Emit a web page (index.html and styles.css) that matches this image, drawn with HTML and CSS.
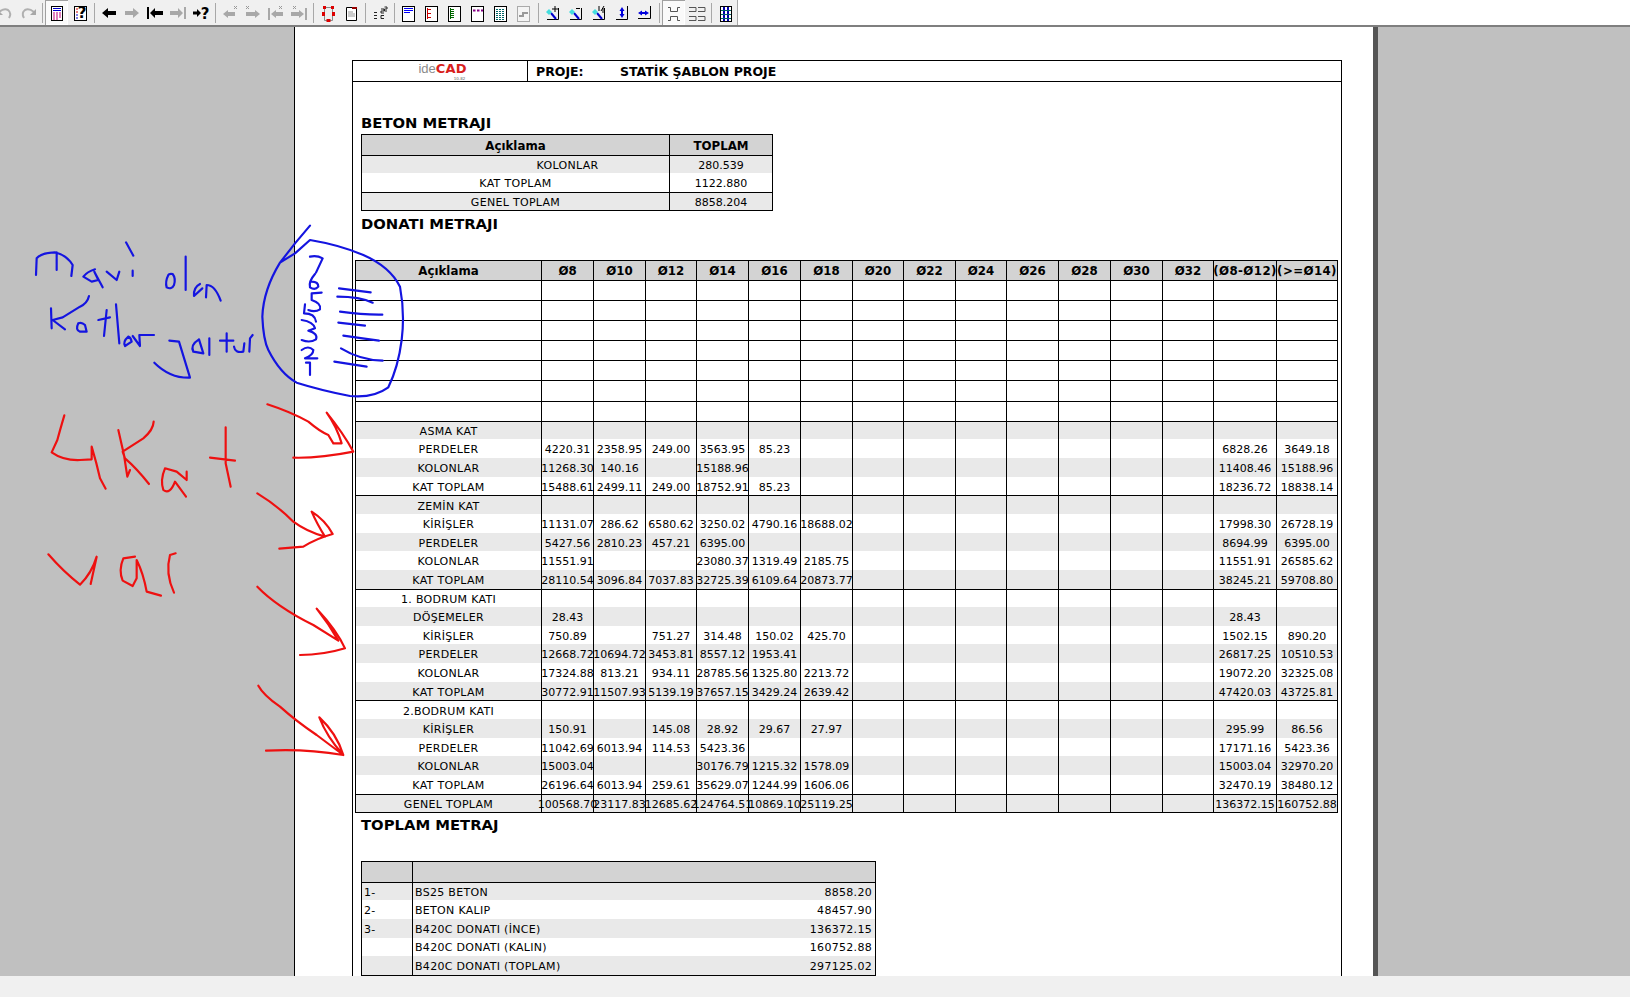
FILE: index.html
```html
<!DOCTYPE html>
<html lang="tr">
<head>
<meta charset="utf-8">
<title>Metraj</title>
<link rel="stylesheet" href="styles.css">
</head>
<body>
<div class="toolbar">
  <div class="tools">
    <span class="btn"><svg viewBox="0 0 20 20"><path d="M4 9 Q9 5 13 7 Q17 10 14 15" class="ln-g"/><path d="M2 6 L2 12 L8 12 Z" class="fl-g"/></svg></span>
    <span class="btn"><svg viewBox="0 0 20 20"><path d="M16 9 Q11 5 7 7 Q3 10 6 15" class="ln-g"/><path d="M18 6 L18 12 L12 12 Z" class="fl-g"/></svg></span>
    <span class="sep"></span>
    <span class="btn on"><svg viewBox="0 0 20 20"><rect x="4.5" y="3.5" width="11" height="14" class="doc"/><path d="M6 5.500H14M6 7.500H14" stroke="#00c"/><path d="M6 10H8M9 10H11M12 10H14M6 12H8M9 12H11M12 12H14M6 14H8M9 14H11M12 14H14M6 16H8M9 16H11" stroke="#c0007a"/></svg></span>
    <span class="btn"><svg viewBox="0 0 20 20"><rect x="4.5" y="3.5" width="12" height="14" class="doc"/><path d="M6 6H8M6 9H8" stroke="#c00"/><path d="M6 12H8M6 15H8" stroke="#00c"/><text x="12" y="15" class="q">?</text></svg></span>
    <span class="sep"></span>
    <span class="btn"><svg viewBox="0 0 20 20"><path d="M3 10 L9 5 V8 H17 V12 H9 V15 Z" class="fl-k"/></svg></span>
    <span class="btn"><svg viewBox="0 0 20 20"><path d="M17 10 L11 5 V8 H3 V12 H11 V15 Z" class="fl-g"/></svg></span>
    <span class="btn"><svg viewBox="0 0 20 20"><path d="M2 4 H4 V16 H2 Z M5 10 L10 5 V8 H18 V12 H10 V15 Z" class="fl-k"/></svg></span>
    <span class="btn"><svg viewBox="0 0 20 20"><path d="M18 4 H16 V16 H18 Z M15 10 L10 5 V8 H2 V12 H10 V15 Z" class="fl-g"/></svg></span>
    <span class="btn"><svg viewBox="0 0 20 20"><path d="M10 10 L6 6 V8.500 H2 V11.500 H6 V14 Z" class="fl-k"/><text x="14" y="16" class="q">?</text></svg></span>
    <span class="sep"></span>
    <span class="btn"><svg viewBox="0 0 20 20"><path d="M3 11 L8 7 V9 H15 V13 H8 V15 Z" class="fl-g"/><path d="M14 3 L17 6 M17 3 L14 6" class="ln-x"/></svg></span>
    <span class="btn"><svg viewBox="0 0 20 20"><path d="M17 11 L12 7 V9 H3 V13 H12 V15 Z" class="fl-g"/><path d="M3 3 L6 6 M6 3 L3 6" class="ln-x"/></svg></span>
    <span class="btn"><svg viewBox="0 0 20 20"><path d="M2 5 H4 V17 H2 Z M5 11 L10 7 V9 H17 V13 H10 V15 Z" class="fl-g"/><path d="M13 3 L16 6 M16 3 L13 6" class="ln-x"/></svg></span>
    <span class="btn"><svg viewBox="0 0 20 20"><path d="M18 5 H16 V17 H18 Z M15 11 L10 7 V9 H2 V13 H10 V15 Z" class="fl-g"/><path d="M4 3 L7 6 M7 3 L4 6" class="ln-x"/></svg></span>
    <span class="sep"></span>
    <span class="btn"><svg viewBox="0 0 20 20"><path d="M6.500 4.500H14.500V17.500H6.500Z" fill="#eee" stroke="#888"/><path d="M5 3H8V6H5Z M13 3H16V6H13Z M4 9H7V13H4Z M14 9H17V13H14Z M8.500 16H12.500V19H8.500Z" fill="#d00"/></svg></span>
    <span class="btn"><svg viewBox="0 0 20 20"><path d="M5.500 4.500H15.500V17.500H5.500Z" fill="#fff" stroke="#000"/><path d="M11 4H16V6H11Z" fill="#900"/><path d="M7 9H12M7 11H14M7 13H14" stroke="#999"/></svg></span>
    <span class="sep"></span>
    <span class="btn"><svg viewBox="0 0 20 20"><path d="M4 9.500H7M4 12.500H7M4 15.500H7M11 6H14V8H11V10H14M11 12.500H14M11 15.500H14M11 12.500V15.500M14.500 4H17V6H14.500V8H17" fill="none" stroke="#222"/></svg></span>
    <span class="sep"></span>
    <span class="btn"><svg viewBox="0 0 20 20"><rect x="3.500" y="3.500" width="12" height="15" class="doc"/><path d="M5 5.500H14M5 7.500H14M5 9.500H11" stroke="#00f"/></svg></span>
    <span class="btn"><svg viewBox="0 0 20 20"><rect x="3.500" y="3.500" width="12" height="15" class="doc"/><path d="M5 6.500H9M5 10.500H9M5 14.500H9M5.500 5V16" stroke="#c00"/></svg></span>
    <span class="btn"><svg viewBox="0 0 20 20"><rect x="3.500" y="3.500" width="12" height="15" class="doc"/><path d="M5 6.500H9M5 8.500H9M5 10.500H9M5 12.500H9M5 14.500H9M5.500 5V16" stroke="#060"/></svg></span>
    <span class="btn"><svg viewBox="0 0 20 20"><rect x="3.500" y="3.500" width="12" height="15" class="doc"/><path d="M5 7.500H7.500M9 7.500H11.500M13 7.500H15" stroke="#808" stroke-width="2"/></svg></span>
    <span class="btn"><svg viewBox="0 0 20 20"><rect x="3.500" y="3.500" width="12" height="15" class="doc"/><path d="M5 6.500H14M5 8.500H14M5 10.500H14M5 12.500H14M5 14.500H14M5 16.500H14" stroke="#066" stroke-dasharray="2 1"/></svg></span>
    <span class="btn"><svg viewBox="0 0 20 20"><rect x="3.500" y="3.500" width="12" height="15" fill="#f4f4f4" stroke="#aaa"/><path d="M5 13H9V10H14" fill="none" stroke="#999" stroke-width="2"/></svg></span>
    <span class="sep"></span>
    <span class="btn"><svg viewBox="0 0 20 20"><path d="M4 16.500H15.500V5" class="thin"/><path d="M8 10 L13 16" stroke="#00c" stroke-width="2"/><path d="M3 9 L6 6 L9 9 L6 12Z" fill="#4dd"/><path d="M12 3V9M9 6H15" stroke="#000"/></svg></span>
    <span class="btn"><svg viewBox="0 0 20 20"><path d="M4 16.500H15.500V5" class="thin"/><path d="M8 10 L13 16" stroke="#00c" stroke-width="2"/><path d="M3 9 L6 6 L9 9 L6 12Z" fill="#4dd"/><path d="M10 5.500H14" stroke="#000"/></svg></span>
    <span class="btn"><svg viewBox="0 0 20 20"><path d="M4 16.500H15.500V5" class="thin"/><path d="M8 10 L13 16" stroke="#00c" stroke-width="2"/><path d="M3 9 L6 6 L9 9 L6 12Z" fill="#4dd"/><path d="M10 3V8M12 8L15 3M14 5V10" stroke="#000"/></svg></span>
    <span class="btn"><svg viewBox="0 0 20 20"><path d="M4 16.500H15.500V3" class="thin"/><path d="M10 4 L7.500 8 H9 V11 H7.500 L10 15 L12.500 11 H11 V8 H12.500Z" fill="#00d"/></svg></span>
    <span class="btn"><svg viewBox="0 0 20 20"><path d="M3 15.500H15.500V3" class="thin"/><path d="M3 10 L7 7.500 V9 H10 V7.500 L14 10 L10 12.500 V11 H7 V12.500Z" fill="#00d"/></svg></span>
    <span class="sep"></span>
    <span class="btn on"><svg viewBox="0 0 20 20"><path d="M4 4.500H6.500V8.500H13.500V4.500H16M4 17.500H6.500V13.500H13.500V17.500H16" class="gr"/></svg></span>
    <span class="btn"><svg viewBox="0 0 20 20"><path d="M2 4.500H9V8.500H2M11 4.500H18V8.500H11M2 17.500H9V13.500H2M11 17.500H18V13.500H11" class="gr"/></svg></span>
    <span class="sep"></span>
    <span class="btn"><svg viewBox="0 0 20 20"><rect x="4.500" y="3.500" width="11" height="15" class="doc"/><path d="M8 4V18M12 4V18" stroke="#00a" stroke-width="2"/><path d="M5 7.500H15M5 11.500H15M5 15.500H15" stroke="#066"/></svg></span>
    <span class="end"></span>
  </div>
</div>

<div class="main">
  <div class="page">
    <div class="frame">
      <div class="head">
        <div class="logo"><span class="mark"><span class="ide">ide</span><span class="cad">CAD</span></span><span class="ver">10.82</span></div>
        <div class="proj"><span class="plabel">PROJE:</span><span>STATİK ŞABLON PROJE</span></div>
      </div>
      <div class="body">
        <h2 class="t1">BETON METRAJI</h2>
        <table class="tb beton">
          <colgroup><col class="b1"><col class="b2"></colgroup>
          <tr class="h21 hd ln"><th class="fst">Açıklama</th><th>TOPLAM</th></tr>
          <tr class="h18 bd ln"><td class="fst lab indent">KOLONLAR</td><td>280.539</td></tr>
          <tr class="h19"><td class="fst lab">KAT TOPLAM</td><td>1122.880</td></tr>
          <tr class="h19 bd ln bot"><td class="fst lab">GENEL TOPLAM</td><td>8858.204</td></tr>
        </table>

        <h2 class="t2">DONATI METRAJI</h2>
        <table class="tb donati">
          <colgroup><col class="d0"><col class="w52"><col class="w52"><col class="w51"><col class="w52"><col class="w52"><col class="w52"><col class="w51"><col class="w52"><col class="w51"><col class="w52"><col class="w52"><col class="w52"><col class="w51"><col class="w63"><col class="w61"></colgroup>
          <tr class="h20 hd ln"><th class="fst">Açıklama</th><th>Ø8</th><th>Ø10</th><th>Ø12</th><th>Ø14</th><th>Ø16</th><th>Ø18</th><th>Ø20</th><th>Ø22</th><th>Ø24</th><th>Ø26</th><th>Ø28</th><th>Ø30</th><th>Ø32</th><th><span class="n wide">(Ø8-Ø12)</span></th><th><span class="n wide">(&gt;=Ø14)</span></th></tr>
          <tr class="h20 ln"><td class="fst"></td><td></td><td></td><td></td><td></td><td></td><td></td><td></td><td></td><td></td><td></td><td></td><td></td><td></td><td></td><td></td></tr>
          <tr class="h20 ln"><td class="fst"></td><td></td><td></td><td></td><td></td><td></td><td></td><td></td><td></td><td></td><td></td><td></td><td></td><td></td><td></td><td></td></tr>
          <tr class="h20 ln"><td class="fst"></td><td></td><td></td><td></td><td></td><td></td><td></td><td></td><td></td><td></td><td></td><td></td><td></td><td></td><td></td><td></td></tr>
          <tr class="h20 ln"><td class="fst"></td><td></td><td></td><td></td><td></td><td></td><td></td><td></td><td></td><td></td><td></td><td></td><td></td><td></td><td></td><td></td></tr>
          <tr class="h20 ln"><td class="fst"></td><td></td><td></td><td></td><td></td><td></td><td></td><td></td><td></td><td></td><td></td><td></td><td></td><td></td><td></td><td></td></tr>
          <tr class="h21 ln"><td class="fst"></td><td></td><td></td><td></td><td></td><td></td><td></td><td></td><td></td><td></td><td></td><td></td><td></td><td></td><td></td><td></td></tr>
          <tr class="h20 ln"><td class="fst"></td><td></td><td></td><td></td><td></td><td></td><td></td><td></td><td></td><td></td><td></td><td></td><td></td><td></td><td></td><td></td></tr>

          <tr class="h18 bd ln"><td class="fst lab">ASMA KAT</td><td></td><td></td><td></td><td></td><td></td><td></td><td></td><td></td><td></td><td></td><td></td><td></td><td></td><td></td><td></td></tr>
          <tr class="h19"><td class="fst lab">PERDELER</td><td><span class="n">4220.31</span></td><td><span class="n">2358.95</span></td><td><span class="n">249.00</span></td><td><span class="n">3563.95</span></td><td><span class="n">85.23</span></td><td></td><td></td><td></td><td></td><td></td><td></td><td></td><td></td><td><span class="n">6828.26</span></td><td><span class="n">3649.18</span></td></tr>
          <tr class="h19 bd"><td class="fst lab">KOLONLAR</td><td><span class="n">11268.30</span></td><td><span class="n">140.16</span></td><td></td><td><span class="n">15188.96</span></td><td></td><td></td><td></td><td></td><td></td><td></td><td></td><td></td><td></td><td><span class="n">11408.46</span></td><td><span class="n">15188.96</span></td></tr>
          <tr class="h18"><td class="fst lab">KAT TOPLAM</td><td><span class="n">15488.61</span></td><td><span class="n">2499.11</span></td><td><span class="n">249.00</span></td><td><span class="n">18752.91</span></td><td><span class="n">85.23</span></td><td></td><td></td><td></td><td></td><td></td><td></td><td></td><td></td><td><span class="n">18236.72</span></td><td><span class="n">18838.14</span></td></tr>

          <tr class="h19 bd ln"><td class="fst lab">ZEMİN KAT</td><td></td><td></td><td></td><td></td><td></td><td></td><td></td><td></td><td></td><td></td><td></td><td></td><td></td><td></td><td></td></tr>
          <tr class="h19"><td class="fst lab">KİRİŞLER</td><td><span class="n">11131.07</span></td><td><span class="n">286.62</span></td><td><span class="n">6580.62</span></td><td><span class="n">3250.02</span></td><td><span class="n">4790.16</span></td><td><span class="n">18688.02</span></td><td></td><td></td><td></td><td></td><td></td><td></td><td></td><td><span class="n">17998.30</span></td><td><span class="n">26728.19</span></td></tr>
          <tr class="h18 bd"><td class="fst lab">PERDELER</td><td><span class="n">5427.56</span></td><td><span class="n">2810.23</span></td><td><span class="n">457.21</span></td><td><span class="n">6395.00</span></td><td></td><td></td><td></td><td></td><td></td><td></td><td></td><td></td><td></td><td><span class="n">8694.99</span></td><td><span class="n">6395.00</span></td></tr>
          <tr class="h19"><td class="fst lab">KOLONLAR</td><td><span class="n">11551.91</span></td><td></td><td></td><td><span class="n">23080.37</span></td><td><span class="n">1319.49</span></td><td><span class="n">2185.75</span></td><td></td><td></td><td></td><td></td><td></td><td></td><td></td><td><span class="n">11551.91</span></td><td><span class="n">26585.62</span></td></tr>
          <tr class="h19 bd"><td class="fst lab">KAT TOPLAM</td><td><span class="n">28110.54</span></td><td><span class="n">3096.84</span></td><td><span class="n">7037.83</span></td><td><span class="n">32725.39</span></td><td><span class="n">6109.64</span></td><td><span class="n">20873.77</span></td><td></td><td></td><td></td><td></td><td></td><td></td><td></td><td><span class="n">38245.21</span></td><td><span class="n">59708.80</span></td></tr>

          <tr class="h18 ln"><td class="fst lab">1. BODRUM KATI</td><td></td><td></td><td></td><td></td><td></td><td></td><td></td><td></td><td></td><td></td><td></td><td></td><td></td><td></td><td></td></tr>
          <tr class="h19 bd"><td class="fst lab">DÖŞEMELER</td><td><span class="n">28.43</span></td><td></td><td></td><td></td><td></td><td></td><td></td><td></td><td></td><td></td><td></td><td></td><td></td><td><span class="n">28.43</span></td><td></td></tr>
          <tr class="h18"><td class="fst lab">KİRİŞLER</td><td><span class="n">750.89</span></td><td></td><td><span class="n">751.27</span></td><td><span class="n">314.48</span></td><td><span class="n">150.02</span></td><td><span class="n">425.70</span></td><td></td><td></td><td></td><td></td><td></td><td></td><td></td><td><span class="n">1502.15</span></td><td><span class="n">890.20</span></td></tr>
          <tr class="h19 bd"><td class="fst lab">PERDELER</td><td><span class="n">12668.72</span></td><td><span class="n">10694.72</span></td><td><span class="n">3453.81</span></td><td><span class="n">8557.12</span></td><td><span class="n">1953.41</span></td><td></td><td></td><td></td><td></td><td></td><td></td><td></td><td></td><td><span class="n">26817.25</span></td><td><span class="n">10510.53</span></td></tr>
          <tr class="h19"><td class="fst lab">KOLONLAR</td><td><span class="n">17324.88</span></td><td><span class="n">813.21</span></td><td><span class="n">934.11</span></td><td><span class="n">28785.56</span></td><td><span class="n">1325.80</span></td><td><span class="n">2213.72</span></td><td></td><td></td><td></td><td></td><td></td><td></td><td></td><td><span class="n">19072.20</span></td><td><span class="n">32325.08</span></td></tr>
          <tr class="h18 bd"><td class="fst lab">KAT TOPLAM</td><td><span class="n">30772.91</span></td><td><span class="n">11507.93</span></td><td><span class="n">5139.19</span></td><td><span class="n">37657.15</span></td><td><span class="n">3429.24</span></td><td><span class="n">2639.42</span></td><td></td><td></td><td></td><td></td><td></td><td></td><td></td><td><span class="n">47420.03</span></td><td><span class="n">43725.81</span></td></tr>

          <tr class="h19 ln"><td class="fst lab">2.BODRUM KATI</td><td></td><td></td><td></td><td></td><td></td><td></td><td></td><td></td><td></td><td></td><td></td><td></td><td></td><td></td><td></td></tr>
          <tr class="h19 bd"><td class="fst lab">KİRİŞLER</td><td><span class="n">150.91</span></td><td></td><td><span class="n">145.08</span></td><td><span class="n">28.92</span></td><td><span class="n">29.67</span></td><td><span class="n">27.97</span></td><td></td><td></td><td></td><td></td><td></td><td></td><td></td><td><span class="n">295.99</span></td><td><span class="n">86.56</span></td></tr>
          <tr class="h18"><td class="fst lab">PERDELER</td><td><span class="n">11042.69</span></td><td><span class="n">6013.94</span></td><td><span class="n">114.53</span></td><td><span class="n">5423.36</span></td><td></td><td></td><td></td><td></td><td></td><td></td><td></td><td></td><td></td><td><span class="n">17171.16</span></td><td><span class="n">5423.36</span></td></tr>
          <tr class="h19 bd"><td class="fst lab">KOLONLAR</td><td><span class="n">15003.04</span></td><td></td><td></td><td><span class="n">30176.79</span></td><td><span class="n">1215.32</span></td><td><span class="n">1578.09</span></td><td></td><td></td><td></td><td></td><td></td><td></td><td></td><td><span class="n">15003.04</span></td><td><span class="n">32970.20</span></td></tr>
          <tr class="h19"><td class="fst lab">KAT TOPLAM</td><td><span class="n">26196.64</span></td><td><span class="n">6013.94</span></td><td><span class="n">259.61</span></td><td><span class="n">35629.07</span></td><td><span class="n">1244.99</span></td><td><span class="n">1606.06</span></td><td></td><td></td><td></td><td></td><td></td><td></td><td></td><td><span class="n">32470.19</span></td><td><span class="n">38480.12</span></td></tr>

          <tr class="h19 bd ln bot"><td class="fst lab">GENEL TOPLAM</td><td><span class="n">100568.70</span></td><td><span class="n">23117.83</span></td><td><span class="n">12685.62</span></td><td><span class="n">124764.51</span></td><td><span class="n">10869.10</span></td><td><span class="n">25119.25</span></td><td></td><td></td><td></td><td></td><td></td><td></td><td></td><td><span class="n">136372.15</span></td><td><span class="n">160752.88</span></td></tr>
        </table>

        <h2 class="t3">TOPLAM METRAJ</h2>
        <table class="tb toplam">
          <colgroup><col class="p1"><col class="p2"></colgroup>
          <tr class="h21 hd ln"><th class="fst"></th><th></th></tr>
          <tr class="h18 bd ln"><td class="fst no lab">1-</td><td class="txt lab"><span>BS25 BETON</span><span>8858.20</span></td></tr>
          <tr class="h19"><td class="fst no lab">2-</td><td class="txt lab"><span>BETON KALIP</span><span>48457.90</span></td></tr>
          <tr class="h19 bd"><td class="fst no lab">3-</td><td class="txt lab"><span>B420C DONATI (İNCE)</span><span>136372.15</span></td></tr>
          <tr class="h18"><td class="fst no"></td><td class="txt lab"><span>B420C DONATI (KALIN)</span><span>160752.88</span></td></tr>
          <tr class="h20 bd bot"><td class="fst no"></td><td class="txt lab"><span>B420C DONATI (TOPLAM)</span><span>297125.02</span></td></tr>
        </table>
      </div>
    </div>
  </div>
</div>
<div class="status"></div>

<svg class="ink" viewBox="0 0 1630 997" aria-hidden="true">
  <g transform="translate(0 210) scale(.33333)" class="blue">
    <path d="M108 195 L110 145 Q125 128 165 127 Q200 135 218 165 L214 198 M170 127 L170 180"/>
    <path d="M285 178 Q262 185 250 200 L275 215 L295 210 L283 185 L308 232"/>
    <path d="M320 185 L350 210 L358 185"/>
    <path d="M378 97 L400 137 M398 182 L398 198"/>
    <path d="M505 195 Q495 215 500 232 Q515 240 522 225 Q528 205 518 192 Q508 190 505 195"/>
    <path d="M557 140 L557 240"/>
    <path d="M600 222 Q580 232 582 258 L607 235 M618 262 L620 225 Q645 225 662 272"/>
    <path d="M153 295 L155 355 M267 258 Q262 280 240 290 L188 322 L158 330 L195 358"/>
    <path d="M235 340 Q225 360 240 365 L260 365 L255 345 Q245 335 235 340"/>
    <path d="M320 300 L312 378 M295 330 L330 322"/>
    <path d="M348 283 L358 400"/>
    <path d="M385 380 Q368 395 375 408 L395 395 Q392 382 385 380 M398 378 L420 408 L418 375 L462 375"/>
    <path d="M508 392 L537 395 L570 503 Q510 505 463 458"/>
    <path d="M597 388 Q570 405 580 425 L610 430 L597 388 M628 385 L628 435"/>
    <path d="M680 370 L680 425 M660 392 L700 392 M702 410 Q705 430 730 425 L733 400 M748 425 L750 385 L758 375"/>
    <path d="M930 47 L885 100 L840 158 Q790 240 787 320 Q790 390 805 420 Q840 490 890 518 Q960 540 1050 558 Q1120 565 1165 532 Q1195 470 1205 390 Q1215 310 1200 230 Q1170 170 1090 135 Q1020 105 930 90 L885 130 L840 158"/>
    <path d="M930 140 Q950 135 968 145 L948 188"/>
    <path d="M945 192 Q925 215 930 232 Q945 242 955 230 Q955 215 935 215"/>
    <path d="M965 248 L935 250 L935 270 Q965 280 960 298 Q945 308 925 300"/>
    <path d="M915 283 L912 310 Q945 310 948 335"/>
    <path d="M905 330 Q940 335 945 355 L925 362 Q955 370 948 388 Q930 400 905 390"/>
    <path d="M905 420 Q925 405 940 420 Q940 435 915 445 L952 445"/>
    <path d="M918 458 L930 458 L930 495"/>
    <path d="M1017 235 L1112 247 M1012 260 Q1080 260 1118 278 M1020 305 Q1090 315 1147 314 M1015 338 L1095 347 M1030 377 Q1085 385 1137 392 M1023 415 Q1080 450 1148 452 M1003 455 L1100 470"/>
  </g>
  <g transform="translate(0 390) scale(.33333)" class="red">
    <path d="M193 76 Q180 120 172 150 L155 187 Q190 212 240 210 L275 208 L275 170 Q290 220 300 265 L317 296"/>
    <path d="M355 120 L372 195 L382 260 L390 240 M461 95 Q460 120 430 145 L368 185 L375 205 Q410 235 447 282"/>
    <path d="M495 235 Q480 270 490 300 Q510 315 525 275 L558 320 M495 235 L530 245 L560 270 L560 245"/>
    <path d="M677 112 L677 220 L692 290 M630 203 L705 212"/>
    <path d="M802 43 Q870 65 925 95 Q960 125 985 135 L1000 160 L1025 160 Q1010 110 980 68 Q1030 130 1060 185 Q960 205 880 203"/>
    <path d="M772 310 Q830 345 880 395 Q920 425 975 440 Q950 400 935 365 Q975 390 998 432 Q950 445 910 470 L838 476"/>
    <path d="M145 493 Q190 545 240 584 Q275 550 290 500 L272 582"/>
    <path d="M405 500 L370 505 Q355 540 368 572 L398 588 L410 565 L410 510 Q430 550 440 605 L483 617"/>
    <path d="M527 490 L510 495 Q495 550 522 608"/>
    <path d="M772 590 Q830 650 940 705 L1015 752 Q985 700 950 656 Q1010 720 1035 775 Q970 795 900 795"/>
    <path d="M775 887 Q790 915 840 950 Q890 995 950 1035 L1030 1095 Q980 1040 958 982 Q1010 1030 1030 1095 Q910 1075 798 1082"/>
  </g>
</svg>
</body>
</html>
```
FILE: styles.css
```css
* { box-sizing: border-box; }
html, body { margin: 0; padding: 0; }
body {
  width: 1630px;
  height: 997px;
  overflow: hidden;
  display: flex;
  flex-direction: column;
  background: #f0f0f0;
  font-family: "DejaVu Sans", Verdana, sans-serif;
  color: #000;
  position: relative;
}

/* toolbar */
.toolbar {
  flex: 0 0 27px;
  background: #fff;
  border-bottom: 2px solid #7f7f7f;
  overflow: hidden;
}
.tools {
  display: flex;
  align-items: center;
  width: 737px;
  height: 25px;
  background: #f0f0f0;
}
.btn {
  flex: 0 0 23px;
  height: 25px;
  display: flex;
  align-items: center;
  justify-content: center;
}
.btn:first-child { margin-left: -7px; }
.btn.on { background: #fafafa; box-shadow: inset 1px 1px 0 #a0a0a0, inset -1px -1px 0 #fff; }
.btn svg { width: 20px; height: 20px; display: block; }
.sep { flex: 0 0 6px; height: 20px; }
.sep::before { content: ""; display: block; width: 1px; height: 20px; margin-left: 3px; background: #a8a8a8; }
.end { flex: 0 0 1px; height: 25px; background: #a8a8a8; margin-left: auto; }

.doc { fill: #fff; stroke: #000; }
.ln-g { fill: none; stroke: #b0b0b0; stroke-width: 2; }
.fl-g { fill: #a8a8a8; }
.fl-k { fill: #000; }
.ln-x { fill: none; stroke: #999; stroke-width: 1; }
.thin { fill: none; stroke: #000; }
.gr { fill: none; stroke: #555; }
.q { font-family: "DejaVu Sans", sans-serif; font-weight: 700; font-size: 15px; text-anchor: middle; fill: #000; }

/* document area */
.main {
  flex: 0 0 949px;
  height: 949px;
  overflow: hidden;
  background: #c0c0c0;
}
.page {
  width: 1084px;
  min-height: 949px;
  margin-left: 294px;
  padding: 33px 0 0 57px;
  background: #fff;
  border-left: 1px solid #000;
  border-right: 5px solid #555;
}
.frame {
  width: 990px;
  border: 1px solid #000;
  border-bottom: 0;
}
.head {
  display: flex;
  height: 21px;
  border-bottom: 1px solid #000;
}
.logo {
  flex: 0 0 175px;
  border-right: 1px solid #000;
  display: flex;
  flex-direction: column;
  align-items: center;
  padding-left: 5px;
}
.mark { display: flex; align-items: baseline; height: 14px; line-height: 14px; margin-top: 1px; }
.ide { font-family: "Liberation Sans", sans-serif; font-size: 13px; color: #8a8a8a; }
.cad { font-weight: 700; font-size: 13px; color: #d8201c; letter-spacing: .1px; }
.ver { font-size: 4px; line-height: 5px; color: #666; margin-left: 34px; }
.proj {
  display: flex;
  align-items: center;
  padding-left: 8px;
  font-weight: 700;
  font-size: 12.5px;
}
.plabel { flex: 0 0 84px; }

.body { padding-left: 2px; }
h2 {
  margin: 0 0 0 6px;
  height: 18px;
  line-height: 18px;
  font-size: 14.8px;
  font-weight: 700;
}
.t1 { margin-top: 32px; margin-bottom: 2px; }
.t2 { margin-top: 4px; margin-bottom: 27px; }
.t3 { margin-top: 3px; margin-bottom: 27px; }

/* tables */
.tb {
  table-layout: fixed;
  border-collapse: separate;
  border-spacing: 0;
  font-size: 11px;
  line-height: 14px;
}
.tb th, .tb td {
  padding: 2px 0 0;
  text-align: center;
  vertical-align: middle;
  border-right: 1px solid #000;
  white-space: nowrap;
}
.tb th { font-size: 11.8px; font-weight: 700; }
.donati th { padding-top: 0; }
.donati td { padding-top: 3px; }
.tb .fst { border-left: 1px solid #000; }
.ln th, .ln td { border-top: 1px solid #000; }
.bot td { border-bottom: 1px solid #000; }
.hd { background: #d3d3d3; }
.bd { background: #e9e9e9; }
.h18 { height: 18px; }
.h19 { height: 19px; }
.h20 { height: 20px; }
.h21 { height: 21px; }
.lab { letter-spacing: .3px; }
.tb .indent { padding-left: 104px; }
.n { display: block; margin: 0 -24px; text-align: center; }
.wide { letter-spacing: .4px; }

.beton { width: 412px; margin-left: 6px; }
.b1 { width: 309px; }
.b2 { width: 103px; }

.donati { width: 983px; }
.d0 { width: 187px; }
.w52 { width: 52px; }
.w51 { width: 51px; }
.w63 { width: 63px; }
.w61 { width: 61px; }

.toplam { width: 515px; margin-left: 6px; }
.p1 { width: 52px; }
.p2 { width: 463px; }
.tb .no { text-align: left; padding-left: 2px; }
.tb .txt { text-align: left; padding-left: 2px; padding-right: 3px; }
.txt span:last-child { float: right; }

.status { flex: 0 0 21px; background: #f0f0f0; }

/* hand-drawn annotations over the page */
.ink {
  position: absolute;
  left: 0;
  top: 0;
  width: 1630px;
  height: 997px;
  pointer-events: none;
}
.blue path, .red path {
  fill: none;
  stroke-width: 6.5;
  stroke-linecap: round;
  stroke-linejoin: round;
}
.blue path { stroke: #1414e0; }
.red path { stroke: #ee1010; }
```
